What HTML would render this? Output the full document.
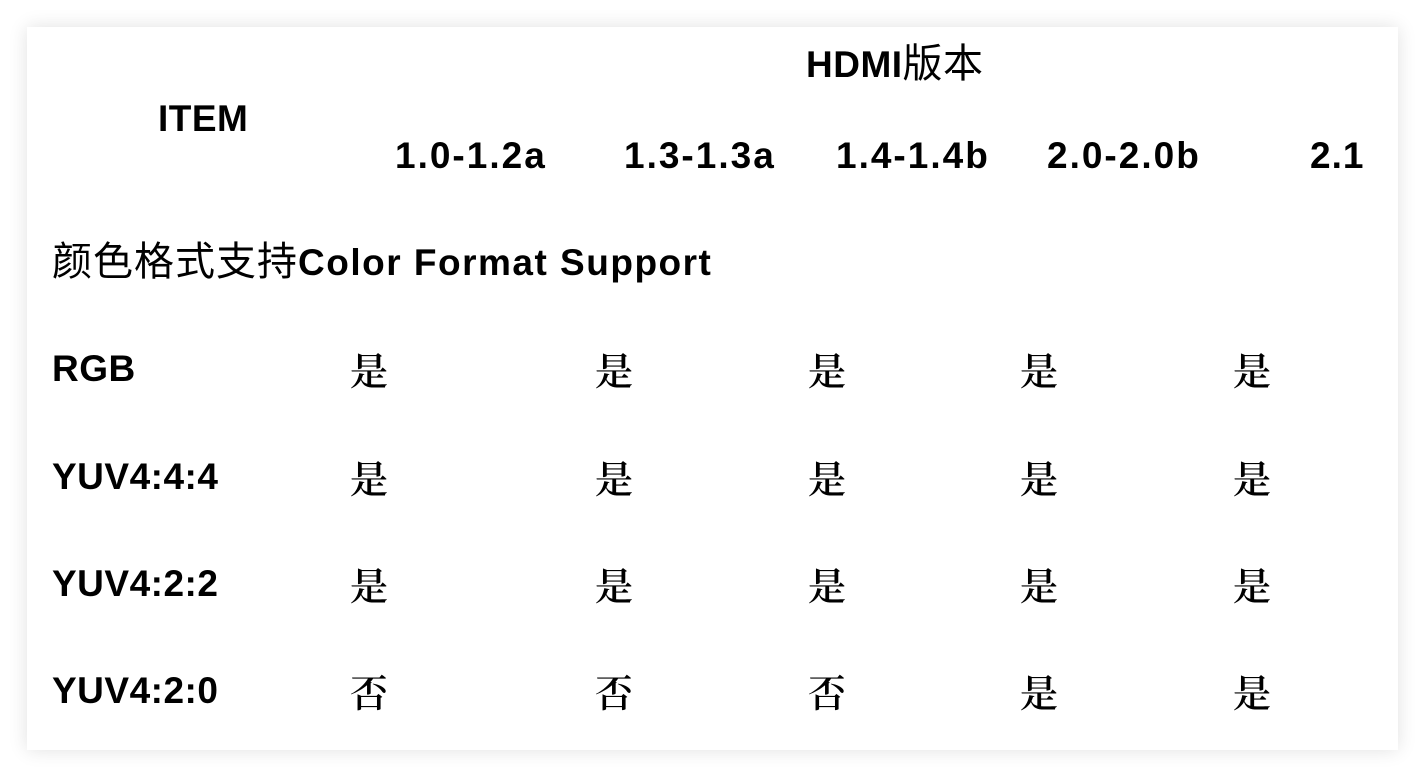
<!DOCTYPE html>
<html><head><meta charset="utf-8"><style>
html,body{margin:0;padding:0;background:#fff;width:1426px;height:778px;overflow:hidden}
.card{position:absolute;left:27px;top:27px;width:1371px;height:723px;background:#fff;box-shadow:0 0 18px rgba(0,0,0,0.12)}
.t{position:absolute;font-family:"Liberation Sans","Noto Sans CJK SC",sans-serif;font-weight:bold;font-size:37px;color:#000;line-height:40px;white-space:nowrap;letter-spacing:0.5px}
.c{position:absolute;font-family:"Noto Serif CJK SC","Liberation Serif",serif;font-weight:600;font-size:38px;line-height:40px;color:#000}
</style></head><body>
<div class="card"></div>
<div class="t" style="left:806px;top:44px">HDMI<span style="font-weight:normal;font-size:40px">版本</span></div>
<div class="t" style="left:158px;top:99px">ITEM</div>
<div class="t" style="left:395px;top:136px;letter-spacing:2px">1.0-1.2a</div>
<div class="t" style="left:624px;top:136px;letter-spacing:2px">1.3-1.3a</div>
<div class="t" style="left:836px;top:136px;letter-spacing:2px">1.4-1.4b</div>
<div class="t" style="left:1047px;top:136px;letter-spacing:2px">2.0-2.0b</div>
<div class="t" style="left:1310px;top:136px;letter-spacing:1px">2.1</div>
<div class="t" style="left:52px;top:242px"><span style="font-weight:normal;font-size:40px;letter-spacing:1px">颜色格式支持</span><span style="letter-spacing:1.5px">Color Format Support</span></div>
<div class="t" style="left:52px;top:349px">RGB</div>
<div class="t" style="left:52px;top:457px">YUV4:4:4</div>
<div class="t" style="left:52px;top:564px">YUV4:2:2</div>
<div class="t" style="left:52px;top:671px">YUV4:2:0</div>
<div class="c" style="left:350px;top:349px">是</div><div class="c" style="left:595px;top:349px">是</div><div class="c" style="left:808px;top:349px">是</div><div class="c" style="left:1020px;top:349px">是</div><div class="c" style="left:1233px;top:349px">是</div>
<div class="c" style="left:350px;top:457px">是</div><div class="c" style="left:595px;top:457px">是</div><div class="c" style="left:808px;top:457px">是</div><div class="c" style="left:1020px;top:457px">是</div><div class="c" style="left:1233px;top:457px">是</div>
<div class="c" style="left:350px;top:564px">是</div><div class="c" style="left:595px;top:564px">是</div><div class="c" style="left:808px;top:564px">是</div><div class="c" style="left:1020px;top:564px">是</div><div class="c" style="left:1233px;top:564px">是</div>
<div class="c" style="left:350px;top:671px">否</div><div class="c" style="left:595px;top:671px">否</div><div class="c" style="left:808px;top:671px">否</div><div class="c" style="left:1020px;top:671px">是</div><div class="c" style="left:1233px;top:671px">是</div>
</body></html>
